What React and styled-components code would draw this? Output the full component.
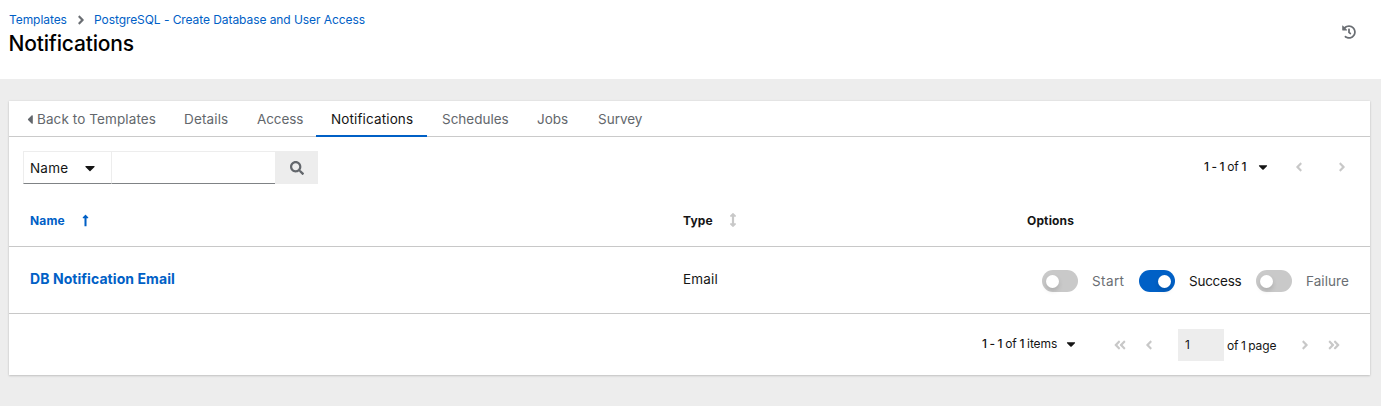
import React from 'react';
import styled, { createGlobalStyle } from 'styled-components';
import {
  FaAngleRight,
  FaAngleLeft,
  FaAngleDoubleLeft,
  FaAngleDoubleRight,
  FaHistory,
  FaCaretDown,
  FaCaretLeft,
  FaSearch,
  FaLongArrowAltUp,
  FaArrowsAltV,
} from 'react-icons/fa';

const GlobalStyle = createGlobalStyle`
  *, *::before, *::after { box-sizing: border-box; }
  body {
    margin: 0;
    background: #ededed;
    color: #151515;
    font-family: Inter, "Open Sans", sans-serif;
    font-size: 13.5px;
    line-height: 20px;
  }
  svg { display: block; flex: none; }
`;

const Page = styled.div`
  height: 406px;
  overflow: hidden;
`;

const Header = styled.header`
  display: flex;
  justify-content: space-between;
  height: 79px;
  padding: 10px 25px 0 9px;
  background: #fff;
`;

const Breadcrumb = styled.nav`
  display: flex;
  align-items: center;
  height: 20px;
  color: #6a6e73;
  font-size: 12px;
`;

const Crumb = styled.a`
  width: ${(p) => p.$w}px;
  color: #0060c6;
  white-space: nowrap;
  letter-spacing: -0.07px;
`;

const CrumbDivider = styled.span`
  width: 27px;
  padding-left: 7px;
`;

const Title = styled.h1`
  margin: 1px 0 0 -0.5px;
  color: #000;
  font-size: 21px;
  font-weight: 500;
  line-height: 26px;
  letter-spacing: -0.17px;
`;

const HistoryButton = styled.span`
  padding-top: 15px;
  color: #6a6e73;
`;

const Card = styled.main`
  height: 274px;
  margin: 22px 11px 0 9px;
  background: #fff;
  box-shadow: 0 1px 2px rgba(3, 3, 3, 0.16), 0 0 2px rgba(3, 3, 3, 0.08);
`;

const Tabs = styled.div`
  display: flex;
  height: 36px;
  padding-left: 4px;
  border-bottom: 1px solid #cacaca;
`;

const Tab = styled.a`
  display: flex;
  align-items: center;
  width: ${(p) => p.$w}px;
  height: 36px;
  padding: 0 0 0 15px;
  color: ${(p) => (p.$active ? '#151515' : '#63676c')};
  box-shadow: ${(p) => (p.$active ? 'inset 0 -2px #0060c6' : 'none')};
  letter-spacing: ${(p) => p.$ls || 0}px;
  white-space: nowrap;
`;

const BackTab = styled(Tab)`
  gap: 4px;
  padding-left: 14px;
  svg { width: 6px; height: 15px; }
`;

const Toolbar = styled.div`
  display: flex;
  justify-content: space-between;
  height: 57px;
  padding: 14px 23px 0 14px;
`;

const SearchGroup = styled.div`
  display: flex;
  height: 33px;
`;

const FilterSelect = styled.div`
  display: flex;
  align-items: center;
  justify-content: space-between;
  width: 88px;
  padding: 0 13px 0 6px;
  border: 1px solid #ededed;
  border-right: 0;
  border-bottom-color: #7f8285;
  letter-spacing: 0.2px;
`;

const SearchInput = styled.input`
  width: 164px;
  border: 1px solid #ededed;
  border-right: 0;
  border-bottom-color: #7f8285;
  border-radius: 0;
  background: #fff;
  outline: none;
`;

const SearchButton = styled.span`
  display: flex;
  align-items: center;
  justify-content: center;
  width: 43px;
  background: #ededed;
  color: #63676c;
`;

const Pager = styled.div`
  display: flex;
  align-items: center;
  height: 32px;
  color: #151515;
  font-size: 12px;
  letter-spacing: -0.1px;
  word-spacing: -0.5px;
`;

const Range = styled.span`
  width: ${(p) => p.$w}px;
  padding-bottom: ${(p) => p.$lift || 0}px;
  white-space: nowrap;
  b { font-weight: 550; }
`;

const PagerIcon = styled.span`
  display: flex;
  width: ${(p) => p.$w}px;
  padding-bottom: ${(p) => p.$lift || 0}px;
  color: ${(p) => (p.$dark ? '#151515' : '#c8c8c8')};
`;

const PageInput = styled.span`
  width: 46px;
  height: 32px;
  padding: 6px 7px;
  background: #ededed;
`;

const PageCount = styled.span`
  width: 74px;
  padding: 1px 0 0 3px;
  white-space: nowrap;
  word-spacing: -0.8px;
`;

const Row = styled.div`
  display: grid;
  grid-template-columns: 653px 344px 1fr;
  align-items: center;
  height: ${(p) => (p.$head ? 53 : 67)}px;
  padding-left: 21px;
  border-bottom: 1px solid #c8c8c8;
  font-size: ${(p) => (p.$head ? 12 : 13.5)}px;
  font-weight: ${(p) => (p.$head ? 650 : 400)};
`;

const HeadCell = styled.div`
  display: flex;
  align-items: center;
  color: ${(p) => (p.$active ? '#0060c6' : '#151515')};
  letter-spacing: 0.15px;
  svg { color: ${(p) => (p.$active ? '#0060c6' : '#c8c8c8')}; }
`;

const HeadLabel = styled.span`
  width: ${(p) => p.$w}px;
  padding-top: 2px;
`;

const NameLink = styled.a`
  padding-bottom: 2px;
  color: #0060c6;
  font-size: 14px;
  font-weight: 650;
  letter-spacing: 0.07px;
`;

const TypeText = styled.span`
  padding-bottom: 2px;
  letter-spacing: 0.15px;
`;

const Options = styled.div`
  display: flex;
  align-items: center;
  padding: 2px 0 0 15px;
`;

const Switch = styled.label`
  display: flex;
  align-items: center;
  gap: 14px;
  width: ${(p) => p.$w}px;
  color: ${(p) => (p.$on ? '#151515' : '#6a6e73')};
  letter-spacing: ${(p) => p.$ls || 0}px;
  white-space: nowrap;
`;

const Track = styled.span`
  display: flex;
  flex: none;
  align-items: center;
  justify-content: ${(p) => (p.$on ? 'flex-end' : 'flex-start')};
  width: 36px;
  height: 22px;
  padding: 0 4px;
  border-radius: 11px;
  background: ${(p) => (p.$on ? '#0060c6' : '#c9c9c9')};
`;

const Knob = styled.span`
  width: 13px;
  height: 13px;
  border-radius: 50%;
  background: #fff;
  box-shadow: 0 3px 5px rgba(3, 3, 3, 0.14);
`;

const Footer = styled.div`
  display: flex;
  justify-content: flex-end;
  padding: 15px 29px 0 0;
`;

const tabs = [
  { label: 'Details', w: 73, ls: 0.15 },
  { label: 'Access', w: 74, ls: -0.1 },
  { label: 'Notifications', w: 111, active: true, ls: 0.13 },
  { label: 'Schedules', w: 95 },
  { label: 'Jobs', w: 61 },
  { label: 'Survey', w: 75 },
];

const options = [
  { label: 'Start', w: 97, ls: 0.4 },
  { label: 'Success', w: 117, on: true, ls: -0.25 },
  { label: 'Failure', w: 100, ls: 0.05 },
];

export default function App() {
  return (
    <Page>
      <GlobalStyle />
      <Header>
        <div>
          <Breadcrumb>
            <Crumb $w={58}>Templates</Crumb>
            <CrumbDivider><FaAngleRight size={14} /></CrumbDivider>
            <Crumb $w={275}>PostgreSQL - Create Database and User Access</Crumb>
          </Breadcrumb>
          <Title>Notifications</Title>
        </div>
        <HistoryButton><FaHistory size={14} /></HistoryButton>
      </Header>
      <Card>
        <Tabs>
          <BackTab $w={156} $ls={0.1}><FaCaretLeft />Back to Templates</BackTab>
          {tabs.map((t) => (
            <Tab key={t.label} $w={t.w} $active={t.active} $ls={t.ls}>{t.label}</Tab>
          ))}
        </Tabs>
        <Toolbar>
          <SearchGroup>
            <FilterSelect>Name<FaCaretDown size={16} /></FilterSelect>
            <SearchInput aria-label="Search" />
            <SearchButton><FaSearch size={14} /></SearchButton>
          </SearchGroup>
          <Pager>
            <Range $w={52}><b>1 - 1</b> of <b>1</b></Range>
            <PagerIcon $w={36} $dark><FaCaretDown size={14} /></PagerIcon>
            <PagerIcon $w={43}><FaAngleLeft size={14} /></PagerIcon>
            <PagerIcon $w={12}><FaAngleRight size={14} /></PagerIcon>
          </Pager>
        </Toolbar>
        <Row $head>
          <HeadCell $active><HeadLabel $w={49}>Name</HeadLabel><FaLongArrowAltUp size={13} /></HeadCell>
          <HeadCell><HeadLabel $w={43}>Type</HeadLabel><FaArrowsAltV size={14} /></HeadCell>
          <HeadCell><HeadLabel $w={60}>Options</HeadLabel></HeadCell>
        </Row>
        <Row>
          <NameLink>DB Notification Email</NameLink>
          <TypeText>Email</TypeText>
          <Options>
            {options.map((o) => (
              <Switch key={o.label} $w={o.w} $on={o.on} $ls={o.ls}>
                <Track $on={o.on}><Knob /></Track>
                {o.label}
              </Switch>
            ))}
          </Options>
        </Row>
        <Footer>
          <Pager>
            <Range $w={82} $lift={2}><b>1 - 1</b> of <b>1</b> items</Range>
            <PagerIcon $w={49} $lift={2} $dark><FaCaretDown size={14} /></PagerIcon>
            <PagerIcon $w={29}><FaAngleDoubleLeft size={14} /></PagerIcon>
            <PagerIcon $w={36}><FaAngleLeft size={14} /></PagerIcon>
            <PageInput>1</PageInput>
            <PageCount>of 1 page</PageCount>
            <PagerIcon $w={29}><FaAngleRight size={14} /></PagerIcon>
            <PagerIcon $w={14}><FaAngleDoubleRight size={14} /></PagerIcon>
          </Pager>
        </Footer>
      </Card>
    </Page>
  );
}
